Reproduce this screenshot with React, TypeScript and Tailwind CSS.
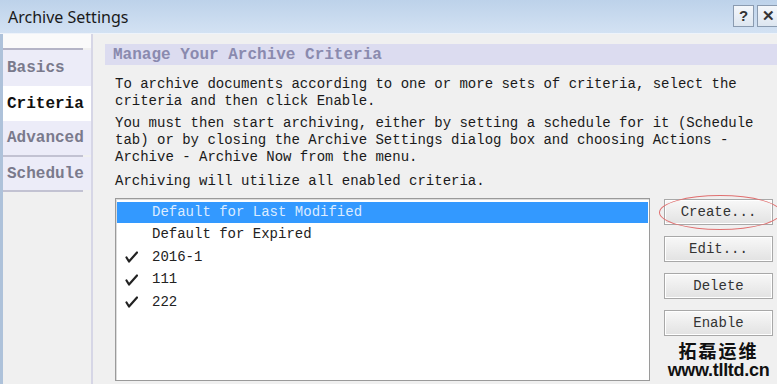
import React from "react";

const mono = { fontFamily: '"Liberation Mono", "Courier New", monospace' };

function Check() {
  return (
    <svg width="13" height="12" viewBox="0 0 13 12" className="block">
      <path d="M1.5 6.5 L4 10.5 L12 1.5" fill="none" stroke="#222" strokeWidth="2.2" strokeLinecap="round" strokeLinejoin="round" />
    </svg>
  );
}

const rows = [
  { label: "Default for Last Modified", checked: false, selected: true },
  { label: "Default for Expired", checked: false, selected: false },
  { label: "2016-1", checked: true, selected: false },
  { label: "111", checked: true, selected: false },
  { label: "222", checked: true, selected: false },
];

function Btn({ label }: { label: string }) {
  return (
    <div
      className="h-[26px] w-[109px] shrink-0 flex items-center justify-center border border-[#a8a8a8] bg-gradient-to-b from-[#f8f8f8] to-[#e2e2e2] text-[14px] text-[#333] shadow-[inset_0_0_0_1px_#fff]"
      style={mono}
    >
      {label}
    </div>
  );
}

export default function App() {
  return (
    <div className="w-[777px] h-[384px] overflow-hidden bg-[#f0f0f0] flex flex-col relative">
      {/* title bar */}
      <div className="h-[33px] shrink-0 bg-gradient-to-b from-[#bdd2ea] to-[#d3e2f3] flex items-center pl-[8px] relative">
        <span className="text-[16px] text-[#1a1a1a]" style={{ fontFamily: '"Noto Sans", "Liberation Sans", sans-serif' }}>
          Archive Settings
        </span>
        <div className="absolute left-[733px] top-[5px] w-[21px] h-[22px] border border-[#8a9bb0] bg-gradient-to-b from-[#f4f7fb] to-[#dde6f0] flex items-center justify-center text-[15px] font-bold text-[#333]" style={{ fontFamily: '"Liberation Sans", sans-serif' }}>
          ?
        </div>
        <div className="absolute left-[757px] top-[5px] w-[24px] h-[22px] border border-[#8a9bb0] bg-gradient-to-b from-[#f4f7fb] to-[#dde6f0] flex items-center pl-[4px] text-[15px] font-bold text-[#333]" style={{ fontFamily: '"Liberation Sans", sans-serif' }}>
          ✕
        </div>
      </div>
      <div className="h-[1px] bg-[#eef3fa] shrink-0" />
      <div className="flex flex-1 min-h-0">
        {/* frame stripe */}
        <div className="w-[3px] bg-[#aec2da] shrink-0" />
        {/* tabs column */}
        <div className="w-[90px] shrink-0 flex flex-col border-r-2 border-[#d6d6e6] bg-[#f0f0f0]" style={mono}>
          <div className="h-[14px] bg-[#fafafa]" />
          <div className="h-[2px] w-[80px] bg-[#b4b4c6]" />
          <div className="h-[36px] bg-[#ececf8] flex items-center pl-[4px] text-[16px] font-bold text-[#7a7a8c]">Basics</div>
          <div className="h-[35px] bg-white flex items-center pl-[4px] text-[16px] font-bold text-[#111]">Criteria</div>
          <div className="h-[34px] bg-[#ececf8] flex items-center pl-[4px] text-[16px] font-bold text-[#7a7a8c]">Advanced</div>
          <div className="h-[2px] w-[80px] bg-[#c2c2d2]" />
          <div className="h-[33px] bg-[#ececf8] flex items-center pl-[4px] text-[16px] font-bold text-[#7a7a8c]">Schedule</div>
          <div className="h-[2px] w-[80px] bg-[#c2c2d2]" />
          <div className="flex-1 bg-[#f0f0f0]" />
        </div>
        {/* main */}
        <div className="flex-1 min-w-0 pl-[12px] pt-[10px] flex flex-col">
          <div className="h-[21px] shrink-0 bg-[#dcdcf0] flex items-center pl-[8px] text-[16px] font-bold text-[#8a8aae]" style={mono}>
            Manage Your Archive Criteria
          </div>
          <div className="pl-[10px] flex flex-col flex-1 min-h-0" style={mono}>
            <div className="mt-[11px] text-[14px] leading-[17px] text-[#1a1a1a] whitespace-pre">
              {"To archive documents according to one or more sets of criteria, select the\ncriteria and then click Enable."}
            </div>
            <div className="mt-[5px] text-[14px] leading-[17px] text-[#1a1a1a] whitespace-pre">
              {"You must then start archiving, either by setting a schedule for it (Schedule\ntab) or by closing the Archive Settings dialog box and choosing Actions -\nArchive - Archive Now from the menu."}
            </div>
            <div className="mt-[7px] text-[14px] leading-[17px] text-[#1a1a1a] whitespace-pre">
              Archiving will utilize all enabled criteria.
            </div>
            <div className="mt-[8px] flex flex-1 min-h-0 pb-[3px]">
              <div className="w-[535px] border border-[#9a9a9a] bg-white px-[1px] pt-[3px] shadow-[inset_1px_1px_0_#dcdcdc]">
                {rows.map((r) => (
                  <div key={r.label} className="h-[22.4px] flex items-start">
                    <div className={"h-[21px] w-full flex items-center " + (r.selected ? "bg-[#3399ff]" : "")}>
                      <div className="w-[35px] flex justify-start pl-[8px]">{r.checked ? <Check /> : null}</div>
                      <span className={"text-[14px] " + (r.selected ? "text-[#dcecff]" : "text-[#222]")}>{r.label}</span>
                    </div>
                  </div>
                ))}
              </div>
              <div className="ml-[14px] flex flex-col pt-[1px] relative">
                <div className="flex flex-col gap-[11px] relative">
                  <Btn label="Create..." />
                  <Btn label="Edit..." />
                  <Btn label="Delete" />
                  <Btn label="Enable" />
                  <div className="absolute left-[-5px] top-[-4px] w-[122px] h-[35px] rounded-[50%] border-[1.5px] border-[#e07070]" />
                </div>
                <div className="mt-auto flex flex-col items-center gap-[1px] pb-[2px]">
                  <span className="text-[18px] leading-[19px] font-bold text-[#111] tracking-[2px]" style={{ fontFamily: '"Noto Sans CJK SC", sans-serif' }}>拓磊运维</span>
                  <span className="text-[18px] leading-[18px] font-bold text-[#111] tracking-[-0.3px]" style={{ fontFamily: '"Liberation Sans", sans-serif' }}>www.tlltd.cn</span>
                </div>
              </div>
            </div>
          </div>
        </div>
      </div>
    </div>
  );
}
